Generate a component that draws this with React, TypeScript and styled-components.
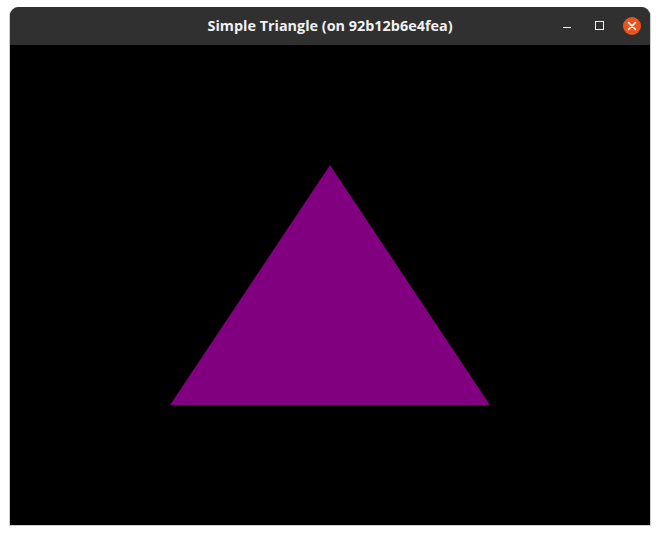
import React from "react";
import styled, { createGlobalStyle } from "styled-components";

const Global = createGlobalStyle`
  html, body { margin: 0; padding: 0; background: #ffffff; }
  body { font-family: "Noto Sans", "DejaVu Sans", sans-serif; }
`;

const Page = styled.div`
  padding: 7px 0 0 9px;
`;

const Window = styled.div`
  width: 640px;
  border: 1px solid #cdcdcd;
  border-top: none;
  border-radius: 9px 9px 0 0;
  background: #303030;
  display: flex;
  flex-direction: column;
`;

const TitleBar = styled.div`
  height: 38px;
  position: relative;
  display: flex;
  align-items: center;
  justify-content: center;
  background: #303030;
  border-radius: 9px 9px 0 0;
`;

const Title = styled.div`
  color: #f2f2f2;
  font-family: "Open Sans", "Noto Sans", sans-serif;
  font-weight: 700;
  font-size: 14.4px;
  margin-left: 0px;
  margin-top: -1px;
`;

const Controls = styled.div`
  position: absolute;
  right: 9px;
  top: 0;
  height: 37px;
  display: flex;
  align-items: center;
  gap: 13px;
`;

const CtlButton = styled.div<{ $close?: boolean }>`
  width: ${(p) => (p.$close ? 18 : 20)}px;
  height: ${(p) => (p.$close ? 18 : 20)}px;
  border-radius: 50%;
  background: ${(p) => (p.$close ? "#e95420" : "transparent")};
  display: flex;
  align-items: center;
  justify-content: center;
`;

const Canvas = styled.div`
  width: 640px;
  height: 480px;
  background: #000000;
  display: block;
`;

export default function App() {
  return (
    <>
      <Global />
      <Page>
        <Window>
          <TitleBar>
            <Title>Simple Triangle (on 92b12b6e4fea)</Title>
            <Controls>
              <CtlButton>
                <svg width="20" height="20" viewBox="0 0 20 20">
                  <rect x="6" y="11" width="8" height="1" fill="#f2f2f2" />
                </svg>
              </CtlButton>
              <CtlButton>
                <svg width="20" height="20" viewBox="0 0 20 20">
                  <rect x="5.5" y="5.5" width="8" height="8" fill="none" stroke="#f2f2f2" strokeWidth="1" />
                </svg>
              </CtlButton>
              <CtlButton $close>
                <svg width="18" height="18" viewBox="0 0 18 18">
                  <path d="M5.5 5.5 L12.5 12.5 M12.5 5.5 L5.5 12.5" stroke="#ffffff" strokeWidth="1.6" strokeLinecap="round" />
                </svg>
              </CtlButton>
            </Controls>
          </TitleBar>
          <Canvas>
            <svg width="640" height="480" viewBox="0 0 640 480">
              <polygon points="320,120 160,360 480,360" fill="#800080" />
            </svg>
          </Canvas>
        </Window>
      </Page>
    </>
  );
}
